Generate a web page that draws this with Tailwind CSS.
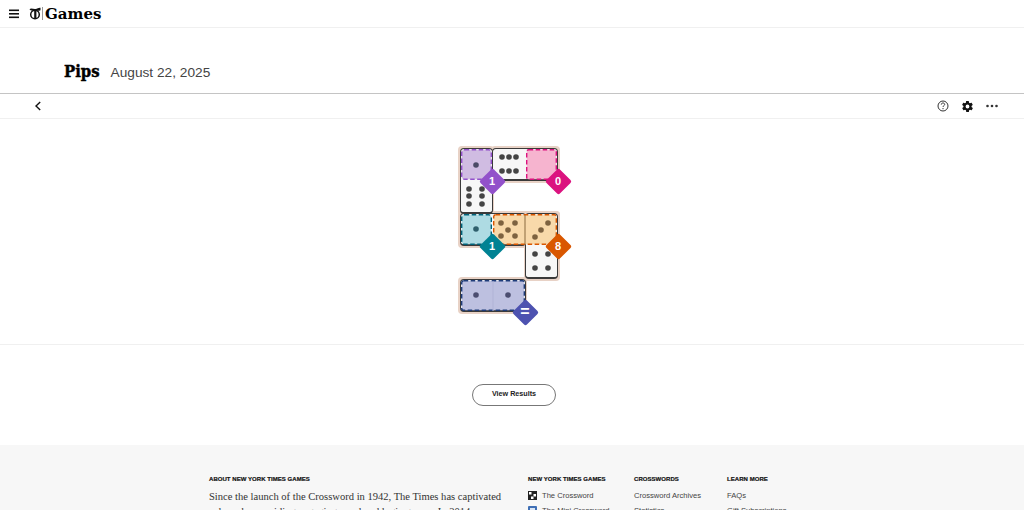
<!DOCTYPE html>
<html lang="en">
<head>
    <meta charset="UTF-8" />
    <meta name="viewport" content="width=device-width, initial-scale=1.0" />
    <title>Pips | Games</title>
    <script src="https://cdn.jsdelivr.net/npm/@tailwindcss/browser@4"></script>
</head>
<body class="h-screen overflow-hidden bg-white font-['Liberation_Sans',sans-serif] text-[#121212]">

    <!-- Top bar -->
    <header class="h-[28px] flex items-center pl-[9px] border-b border-[#f0f0f0]">
        <svg class="w-[11px] h-[10px]" viewBox="0 0 11 10" fill="#121212">
            <rect y="0.5" width="10" height="1.6"></rect>
            <rect y="4" width="10" height="1.6"></rect>
            <rect y="7.5" width="10" height="1.6"></rect>
        </svg>
        <svg class="ml-[9px] w-[12px] h-[13px]" viewBox="0 0 12 13">
            <circle cx="6" cy="7.5" r="4.3" fill="none" stroke="#121212" stroke-width="1.5"></circle>
            <path d="M0.5 2.2 C2 0.5 4.5 2.4 6.5 2 S10 0.3 11.5 0.8 L11.5 3.2 C10 4 8.5 3.8 7.4 3.6 L7.4 12 L5.2 12 L5.2 3.6 C3.5 3.6 1.5 3.8 0.5 2.2Z" fill="#121212"></path>
        </svg>
        <div class="ml-[1px] w-px h-[13px] bg-[#999]"></div>
        <span class="ml-[2px] pt-[2px] font-['DejaVu_Serif',serif] font-bold text-[15px] leading-none text-black">Games</span>
    </header>

    <!-- Title -->
    <section class="h-[66px] flex items-end pl-[64px] pb-[9px] border-b border-[#c4c4c4]">
        <h1 class="font-['DejaVu_Serif_Condensed','DejaVu_Serif',serif] font-bold text-[16.5px] leading-[24px] [-webkit-text-stroke:0.4px_#000] text-black">Pips</h1>
        <p class="ml-[11px] text-[13.7px] leading-[24px] translate-y-[1px] text-[#444]">August 22, 2025</p>
    </section>

    <!-- Toolbar -->
    <nav class="h-[25px] flex items-center justify-between pl-[34px] pr-[26px] border-b border-[#f0f0f0]">
        <svg class="w-[8px] h-[10px]" viewBox="0 0 8 10" fill="none" stroke="#121212" stroke-width="1.4">
            <path d="M6.2 1 L2 5 L6.2 9"></path>
        </svg>
        <div class="flex items-center gap-[12px]">
            <svg class="w-[12px] h-[12px]" viewBox="0 0 12 12" fill="none" stroke="#333" stroke-width="1">
                <circle cx="6" cy="6" r="5"></circle>
                <path d="M4.3 4.6 C4.3 3.5 5 3 6 3 C7 3 7.7 3.6 7.7 4.5 C7.7 5.6 6 5.6 6 7"></path>
                <path d="M6 8 L6 9.2"></path>
            </svg>
            <svg class="w-[13px] h-[13px]" viewBox="0 0 24 24" fill="#121212">
                <path fill-rule="evenodd" d="M19.4 13c.1-.3.1-.7.1-1s0-.7-.1-1l2.1-1.6c.2-.2.2-.4.1-.6l-2-3.5c-.1-.2-.4-.3-.6-.2l-2.5 1c-.5-.4-1.1-.7-1.7-1l-.4-2.6c0-.3-.2-.5-.5-.5h-4c-.3 0-.5.2-.5.4l-.4 2.7c-.6.2-1.1.6-1.7 1l-2.5-1c-.2-.1-.5 0-.6.2l-2 3.5c-.1.2-.1.5.1.6L4.6 11c0 .3-.1.7-.1 1s0 .7.1 1l-2.1 1.6c-.2.2-.2.4-.1.6l2 3.5c.1.2.4.3.6.2l2.5-1c.5.4 1.1.7 1.7 1l.4 2.7c0 .2.2.4.5.4h4c.3 0 .5-.2.5-.4l.4-2.7c.6-.2 1.2-.6 1.7-1l2.5 1c.2.1.5 0 .6-.2l2-3.5c.1-.2.1-.5-.1-.6L19.4 13zM12 15.5a3.5 3.5 0 1 1 0-7 3.5 3.5 0 0 1 0 7z"></path>
            </svg>
            <svg class="w-[12px] h-[4px]" viewBox="0 0 12 4" fill="#333">
                <circle cx="1.5" cy="2" r="1.3"></circle>
                <circle cx="6" cy="2" r="1.3"></circle>
                <circle cx="10.5" cy="2" r="1.3"></circle>
            </svg>
        </div>
    </nav>

    <!-- Board -->
    <main class="h-[226px] pl-[458px] pt-[27px] border-b border-[#f0f0f0]">
        <div class="relative w-[104px] h-[170px]">
            <!-- tan backing -->
            <div class="absolute left-[0px] top-[0px] w-[36px] h-[70px] rounded-[4px] bg-[#e8d2c6]"></div>
            <div class="absolute left-[33px] top-[0px] w-[69px] h-[37px] rounded-[4px] bg-[#e8d2c6]"></div>
            <div class="absolute left-[0px] top-[65px] w-[102px] h-[37px] rounded-[4px] bg-[#e8d2c6]"></div>
            <div class="absolute left-[66px] top-[65px] w-[36px] h-[70px] rounded-[4px] bg-[#e8d2c6]"></div>
            <div class="absolute left-[0px] top-[131px] w-[69px] h-[37px] rounded-[4px] bg-[#e8d2c6]"></div>

            <!-- dominoes -->
            <div class="absolute left-[2px] top-[2px] w-[33px] h-[66px] rounded-[4px] bg-[#f7f7f7] border-[1.5px] border-[#3a3a3a] border-b-[2px]"></div>
            <div class="absolute left-[34px] top-[2px] w-[66px] h-[33px] rounded-[4px] bg-[#f7f7f7] border-[1.5px] border-[#3a3a3a] border-b-[2px]"></div>
            <div class="absolute left-[2px] top-[67px] w-[66px] h-[33px] rounded-[4px] bg-[#f7f7f7] border-[1.5px] border-[#3a3a3a] border-b-[2px]"></div>
            <div class="absolute left-[67px] top-[67px] w-[33px] h-[66px] rounded-[4px] bg-[#f7f7f7] border-[1.5px] border-[#3a3a3a] border-b-[2px]"></div>
            <div class="absolute left-[2px] top-[133px] w-[66px] h-[33px] rounded-[4px] bg-[#f7f7f7] border-[1.5px] border-[#3a3a3a] border-b-[2px]"></div>

            <!-- regions, divider lines and pips -->
            <svg class="absolute left-0 top-0 w-[104px] h-[170px]" viewBox="0 0 104 170">
                <g stroke-width="1.4" stroke-dasharray="4.5 2.5">
                    <rect x="3.7" y="3.7" width="29.6" height="29.6" rx="3" fill="#d0bce2" stroke="#9251ca"></rect>
                    <rect x="68.7" y="3.7" width="29.6" height="29.6" rx="2" fill="#f6b4cf" stroke="#db137f"></rect>
                    <rect x="3.7" y="68.7" width="29.6" height="29.6" rx="3" fill="#aedbe3" stroke="#00637a"></rect>
                    <rect x="35.7" y="68.7" width="62.6" height="29.6" rx="2" fill="#f8d9aa" stroke="#d95700"></rect>
                    <rect x="3.7" y="134.7" width="62.6" height="29.6" rx="2" fill="#bdc0e0" stroke="#1f3c7a"></rect>
                </g>
                <path d="M67 69 V99" stroke="#8a6a3e" stroke-width="1"></path>
                <path d="M35 135 V165" stroke="#b0b3d6" stroke-width="1"></path>
                <g fill="#444">
                    <circle cx="18" cy="19" r="2.8" fill="#4b4a66"></circle>
                    <circle cx="44" cy="11" r="2.8"></circle><circle cx="51" cy="11" r="2.8"></circle><circle cx="58" cy="11" r="2.8"></circle>
                    <circle cx="44" cy="25" r="2.8"></circle><circle cx="51" cy="25" r="2.8"></circle><circle cx="58" cy="25" r="2.8"></circle>
                    <circle cx="11" cy="43" r="2.8"></circle><circle cx="24" cy="43" r="2.8"></circle>
                    <circle cx="11" cy="50" r="2.8"></circle><circle cx="24" cy="50" r="2.8"></circle>
                    <circle cx="11" cy="58" r="2.8"></circle><circle cx="24" cy="58" r="2.8"></circle>
                    <circle cx="77" cy="108" r="2.8"></circle><circle cx="90" cy="108" r="2.8"></circle>
                    <circle cx="77" cy="122" r="2.8"></circle><circle cx="90" cy="122" r="2.8"></circle>
                </g>
                <circle cx="18" cy="83" r="2.8" fill="#2f5f6c"></circle>
                <g fill="#7d6240">
                    <circle cx="43" cy="77" r="2.8"></circle><circle cx="57" cy="77" r="2.8"></circle>
                    <circle cx="50" cy="84" r="2.8"></circle>
                    <circle cx="43" cy="90" r="2.8"></circle><circle cx="57" cy="90" r="2.8"></circle>
                    <circle cx="90" cy="77" r="2.8"></circle><circle cx="83" cy="84" r="2.8"></circle><circle cx="77" cy="91" r="2.8"></circle>
                </g>
                <circle cx="18" cy="149" r="2.8" fill="#4b4d70"></circle>
                <circle cx="50" cy="149" r="2.8" fill="#4b4d70"></circle>
            </svg>

            <!-- constraint badges -->
            <div class="absolute left-[24.5px] top-[25.5px] w-[19px] h-[19px] rotate-45 rounded-[2px] bg-[#9251ca]"></div>
            <span class="absolute left-[24px] top-[25px] w-[20px] h-[20px] flex items-center justify-center text-[11px] font-bold text-white">1</span>
            <div class="absolute left-[90.5px] top-[25.5px] w-[19px] h-[19px] rotate-45 rounded-[2px] bg-[#db137f]"></div>
            <span class="absolute left-[90px] top-[25px] w-[20px] h-[20px] flex items-center justify-center text-[11px] font-bold text-white">0</span>
            <div class="absolute left-[24.5px] top-[90.5px] w-[19px] h-[19px] rotate-45 rounded-[2px] bg-[#008293]"></div>
            <span class="absolute left-[24px] top-[90px] w-[20px] h-[20px] flex items-center justify-center text-[11px] font-bold text-white">1</span>
            <div class="absolute left-[90.5px] top-[90.5px] w-[19px] h-[19px] rotate-45 rounded-[2px] bg-[#d95700]"></div>
            <span class="absolute left-[90px] top-[90px] w-[20px] h-[20px] flex items-center justify-center text-[11px] font-bold text-white">8</span>
            <div class="absolute left-[57.5px] top-[156.5px] w-[19px] h-[19px] rotate-45 rounded-[2px] bg-[#4d52b0]"></div>
            <span class="absolute left-[57px] top-[156px] w-[20px] h-[20px] flex items-center justify-center text-[16px] font-bold text-white">=</span>
        </div>
    </main>

    <!-- Results button -->
    <section class="h-[100px] flex items-center pl-[472px] pb-[1px]">
        <button class="w-[84px] h-[22px] rounded-full border border-[#777] bg-white text-[7.2px] font-bold text-[#222]">View Results</button>
    </section>

    <!-- Footer -->
    <footer class="bg-[#f7f7f7] h-[65px] overflow-hidden pt-[30px] pl-[209px] flex">
        <div class="w-[319px]">
            <h2 class="text-[6px] leading-[8px] font-bold uppercase tracking-[0.05px] [-webkit-text-stroke:0.2px_#121212]">About New York Times Games</h2>
            <p class="mt-[6px] w-[300px] font-['Liberation_Serif',serif] text-[10.55px] leading-[15px] text-[#333]">Since the launch of the Crossword in 1942, The Times has captivated solvers by providing engaging word and logic games. In 2014, we introduced the Mini Crossword.</p>
        </div>
        <div class="w-[106px]">
            <h2 class="text-[6px] leading-[8px] font-bold uppercase tracking-[0.05px] [-webkit-text-stroke:0.2px_#121212]">New York Times Games</h2>
            <ul class="mt-[6.5px] text-[7.6px] leading-[12px] text-[#444] space-y-[3px]">
                <li class="flex items-center gap-[5px]">
                    <svg class="w-[9px] h-[9px]" viewBox="0 0 9 9">
                        <rect width="9" height="9" fill="#222"></rect>
                        <rect x="1" y="1" width="2.5" height="2.5" fill="#fff"></rect>
                        <rect x="5.5" y="3" width="2.5" height="2.5" fill="#fff"></rect>
                        <rect x="3" y="5.5" width="2.5" height="2.5" fill="#fff"></rect>
                    </svg>
                    The Crossword
                </li>
                <li class="flex items-center gap-[5px]">
                    <svg class="w-[9px] h-[9px]" viewBox="0 0 9 9">
                        <rect width="9" height="9" rx="1" fill="#3f6fb5"></rect>
                        <rect x="2" y="2" width="5" height="5" fill="#dbe6f5"></rect>
                    </svg>
                    The Mini Crossword
                </li>
            </ul>
        </div>
        <div class="w-[93px]">
            <h2 class="text-[6px] leading-[8px] font-bold uppercase tracking-[0.05px] [-webkit-text-stroke:0.2px_#121212]">Crosswords</h2>
            <ul class="mt-[6.5px] text-[7.6px] leading-[12px] text-[#444] space-y-[3px]">
                <li>Crossword Archives</li>
                <li>Statistics</li>
            </ul>
        </div>
        <div>
            <h2 class="text-[6px] leading-[8px] font-bold uppercase tracking-[0.05px] [-webkit-text-stroke:0.2px_#121212]">Learn More</h2>
            <ul class="mt-[6.5px] text-[7.6px] leading-[12px] text-[#444] space-y-[3px]">
                <li>FAQs</li>
                <li>Gift Subscriptions</li>
            </ul>
        </div>
    </footer>
</body>
</html>
